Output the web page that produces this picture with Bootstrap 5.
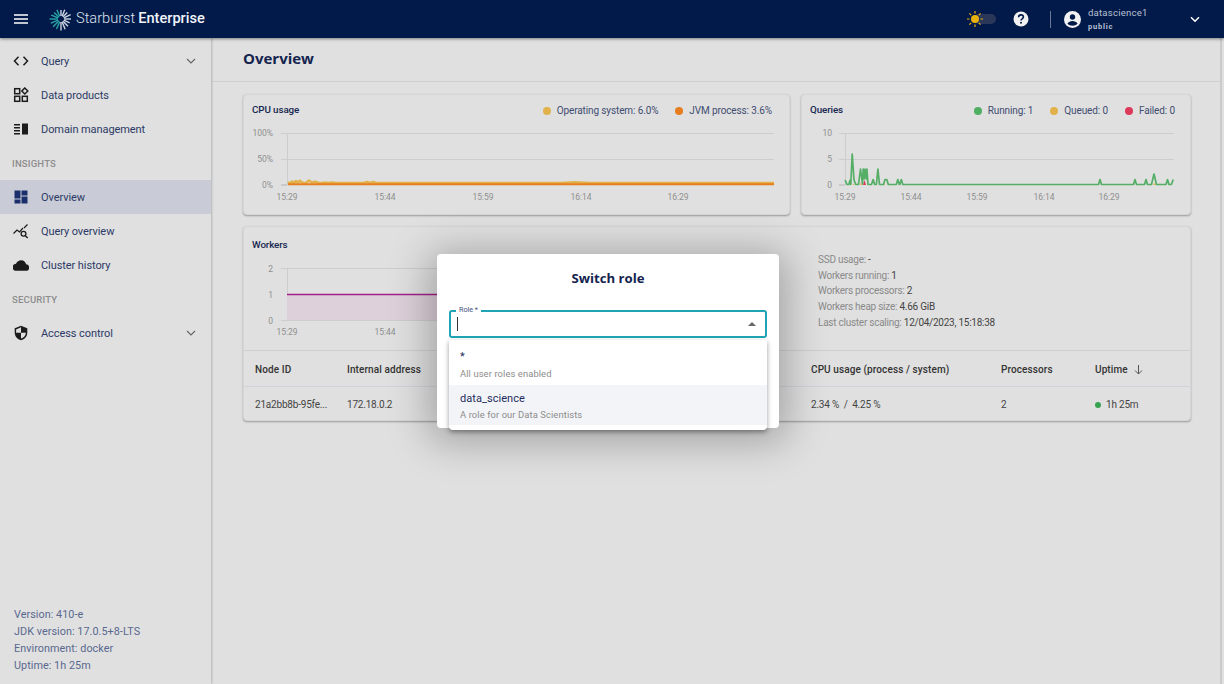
<!DOCTYPE html>
<html lang="en"><head><meta charset="utf-8"><title>Overview</title>
<link href="https://cdn.jsdelivr.net/npm/bootstrap@5.3.0/dist/css/bootstrap.min.css" rel="stylesheet">
<style>
html,body{height:100%;}
body{margin:0;overflow:hidden;background:#e0e0e0;font-family:Roboto,"Liberation Sans",sans-serif;color:#3b3b3b;width:1224px;height:684px;position:relative;}
.top-bar{height:38px;background:#021a4a;color:#fff;padding:0;flex-wrap:nowrap;box-shadow:0 1px 3px rgba(0,0,0,.45);position:relative;z-index:3;}
.burger{margin-left:14px;width:14px;height:12px;}
.brand{margin-left:21px;display:flex;align-items:center;}
.brand-word{font-size:14.6px;color:#dfe3ee;margin-left:3px;font-weight:300;}
.brand-word b{font-weight:500;color:#f1f3f8;margin-left:3px;}
.tools{margin-left:auto;display:flex;align-items:center;height:38px;}
.theme-toggle{margin-top:-1px;}
.help{margin-left:17px;}
.divider{width:1px;height:17px;background:#6c7896;margin:0 13px 0 21px;}
.user-box{width:102px;margin-left:7px;}
.u-name{font-size:9.6px;line-height:12px;color:#b9c0d2;letter-spacing:.2px;margin-top:-1px;}
.u-role{font-size:7.5px;line-height:9px;font-weight:700;color:#b9c0d2;letter-spacing:.8px;margin-top:3px;}
.user-chev{margin-right:24px;}
.shell{height:646px;}
.side{width:211px;flex:none;height:646px;background:#e0e0e0;box-shadow:1px 0 2px rgba(0,0,0,.2);padding-top:6px;position:relative;z-index:2;}
.nav-row{height:34px;display:flex;align-items:center;padding:2px 14px 0;font-size:11px;color:#2c3a66;letter-spacing:-.08px;}
.nav-row.on{background:#c9ccd6;}
.nav-row svg.ico{width:16px;height:16px;margin-left:-1px;margin-right:12px;flex:none;margin-top:-2px;}
.nav-row svg.chev{margin-left:auto;margin-right:1px;margin-top:-2px;}
.nav-head{height:34px;display:flex;align-items:center;padding:2px 12px 0;font-size:9.5px;color:#8d8d8d;letter-spacing:.2px;font-weight:500;}
.side-foot{position:absolute;left:14px;bottom:10px;font-size:10.8px;line-height:17px;color:#59688f;letter-spacing:.05px;}
.main{flex:none;width:1010px;margin-left:1px;border-right:2px solid #cbcbcb;}
.page-head{height:44px;border-bottom:1px solid #cfcfcf;padding:0 31px 3px;display:flex;align-items:center;margin-bottom:12px;}
.page-title{font-family:"Open Sans",sans-serif;font-weight:700;font-size:15px;color:#14244f;margin:0;}
.panes{padding:0 0 0 31px;width:1008px;}
.pane{background:#e0e0e0;border:1px solid #d6d6d6;border-radius:4px;box-shadow:0 1px 2px rgba(0,0,0,.32);color:inherit;}
.pane-cpu{width:547px;height:121px;}
.pane-q{width:390px;height:121px;margin-left:11px;}
.pane-work{width:948px;height:195px;margin-top:11px;}
.pane-top{height:31px;padding:0 15px 0 8px;display:flex;align-items:center;justify-content:space-between;}
.pane-cpu .pane-top{padding-right:17px;}
.pane-work .pane-top{height:37px;}
.pane-name{font-size:9.8px;font-weight:500;color:#15264f;letter-spacing:-.1px;}
.legend{display:flex;align-items:center;font-size:10px;color:#414d70;letter-spacing:-.12px;}
.dot{width:8px;height:8px;border-radius:50%;display:inline-block;margin-right:6px;margin-left:17px;}
.chart{display:block;}
.chart text{font-family:Roboto,sans-serif;font-size:8.5px;fill:#8f8f8f;}
.work-top{height:124px;position:relative;}
.stats{position:absolute;left:574px;top:25px;font-size:10px;line-height:15.7px;color:#8a8a8a;letter-spacing:-.25px;}
.stats span{color:#444;}
.work-table{width:100%;table-layout:fixed;margin:0;--bs-table-bg:transparent;font-size:10px;letter-spacing:-.2px;color:#444;}
.work-table th,.work-table td{padding:2px 0 0 11px;border-bottom:0;white-space:nowrap;vertical-align:middle;box-shadow:none;color:#444;}
.work-table th{height:36px;font-weight:500;color:#333;border-top:1px solid #cfcfcf;border-bottom:1px solid #d2d2dc;letter-spacing:.1px;}
.work-table td{height:34px;}
.live{width:6px;height:6px;border-radius:50%;background:#37a24f;display:inline-block;margin-right:5px;}
.dialog{position:absolute;left:437px;top:254px;width:342px;height:174px;background:#fff;border-radius:4px;box-shadow:0 6px 40px 8px rgba(0,0,0,.28);z-index:5;padding:0 12px;}
.dialog-title{font-family:"Open Sans",sans-serif;font-weight:700;font-size:13.2px;color:#14244f;text-align:center;margin:0;height:56px;line-height:48px;}
.role-field{height:28px;border:2px solid #1ea4b4;border-radius:3px;position:relative;display:flex;align-items:center;}
.role-tag{position:absolute;left:5px;top:-7px;background:#fff;padding:0 3px;font-size:7.2px;line-height:9px;color:#45527a;}
.cursor{width:1px;height:14px;background:#333;margin-left:6px;}
.arrow{margin-left:auto;margin-right:9px;width:0;height:0;border-left:4px solid transparent;border-right:4px solid transparent;border-bottom:4px solid #666;}
.role-menu{position:absolute;left:12px;top:86px;width:318px;height:90px;background:#fff;border:0;border-radius:0 0 4px 4px;box-shadow:0 2px 5px rgba(0,0,0,.4);}
.role-opt{border:0;padding:0 11px;border-radius:0!important;background:transparent;}
.opt-a{height:45px;}
.opt-b{height:40px;background:#f3f4f8;}
.opt-main{font-size:11px;color:#1e2d5e;letter-spacing:.05px;line-height:14px;}
.opt-sub{font-size:9.4px;color:#8c8c8c;letter-spacing:.1px;line-height:12px;}
.opt-a .opt-main{padding-top:10px;height:28px;}
.opt-b .opt-main{padding-top:7px;height:24px;}
</style></head><body>

<nav class="navbar top-bar d-flex align-items-center">
  <svg class="burger" viewBox="0 0 14 12"><path d="M0 2h14M0 6h14M0 10h14" stroke="#fff" stroke-width="1.5"/></svg>
  <span class="brand">
    <svg width="24" height="24" viewBox="-12 -12 24 24">
      <g stroke-width="1.4">
        <g stroke="#2aa6a8">
          <line x1="-3" y1="0" x2="-11.5" y2="0"/>
          <line x1="-3" y1="0" x2="-10.5" y2="0" transform="rotate(22)"/>
          <line x1="-3" y1="0" x2="-11" y2="0" transform="rotate(-22)"/>
          <line x1="-3" y1="0" x2="-9.5" y2="0" transform="rotate(44)"/>
          <line x1="-3" y1="0" x2="-11" y2="0" transform="rotate(-44)"/>
          <line x1="-3" y1="0" x2="-10" y2="0" transform="rotate(66)"/>
          <line x1="-3" y1="0" x2="-11" y2="0" transform="rotate(-66)"/>
        </g>
        <g stroke="#cfd6e4">
          <line x1="-3" y1="0" x2="-9" y2="0" transform="rotate(90)"/>
          <line x1="-3" y1="0" x2="-11.5" y2="0" transform="rotate(-90)"/>
          <line x1="-3" y1="0" x2="-10" y2="0" transform="rotate(112)"/>
          <line x1="-3" y1="0" x2="-11" y2="0" transform="rotate(-112)"/>
          <line x1="-3" y1="0" x2="-9" y2="0" transform="rotate(134)"/>
          <line x1="-3" y1="0" x2="-10" y2="0" transform="rotate(-134)"/>
          <line x1="-3" y1="0" x2="-10.5" y2="0" transform="rotate(156)"/>
          <line x1="-3" y1="0" x2="-9.5" y2="0" transform="rotate(-156)"/>
          <line x1="-3" y1="0" x2="-10" y2="0" transform="rotate(180)"/>
        </g>
      </g>
    </svg>
    <span class="brand-word">Starburst<b>Enterprise</b></span>
  </span>
  <div class="tools">
    <svg class="theme-toggle" width="30" height="18" viewBox="0 0 30 18">
      <rect x="8" y="4" width="22" height="10" rx="5" fill="#2b3759"/>
      <circle cx="9" cy="9" r="4" fill="#e9b10e"/>
      <path d="M9 1v2.500M9 14.500V17M1 9h2.500M14.500 9H17M3.400 3.400l1.800 1.800M12.800 12.800l1.800 1.800M3.400 14.600l1.800-1.800M12.800 5.200l1.800-1.800" stroke="#e9b10e" stroke-width="1.200"/>
    </svg>
    <svg class="help" width="16" height="16" viewBox="0 0 16 16">
      <circle cx="8" cy="8" r="7.500" fill="#f2f2f2"/>
      <path d="M5.600 6.200c0-1.500 1.100-2.300 2.400-2.300s2.400.8 2.400 2.100c0 1.900-2.400 1.900-2.400 3.600" fill="none" stroke="#021a4a" stroke-width="1.600"/>
      <circle cx="8" cy="11.800" r="1" fill="#021a4a"/>
    </svg>
    <span class="divider"></span>
    <svg width="17" height="17" viewBox="0 0 17 17">
      <circle cx="8.500" cy="8.500" r="8.500" fill="#f2f2f2"/>
      <circle cx="8.500" cy="6" r="2.700" fill="#021a4a"/>
      <path d="M3.400 12.800c1-2 3-2.800 5.100-2.800s4.100.8 5.100 2.800c-1.300 1.300-3.100 2-5.100 2s-3.800-.7-5.100-2z" fill="#021a4a"/>
    </svg>
    <div class="user-box">
      <div class="u-name">datascience1</div>
      <div class="u-role">public</div>
    </div>
    <svg class="user-chev" width="10" height="7" viewBox="0 0 10 7"><path d="M1 1.200l4 4 4-4" fill="none" stroke="#fff" stroke-width="1.500"/></svg>
  </div>
</nav>

<div class="shell d-flex">
  <aside class="side">
    <div class="nav-row"><svg class="ico" viewBox="0 0 16 16"><path d="M5.500 3.800L1.500 8l4 4.200M10.500 3.800l4 4.200-4 4.200" fill="none" stroke="#1c1c1c" stroke-width="1.500"/></svg>Query<svg class="chev" width="10" height="6" viewBox="0 0 10 6"><path d="M1 1l4 4 4-4" fill="none" stroke="#666" stroke-width="1.200"/></svg></div>
    <div class="nav-row"><svg class="ico" viewBox="0 0 16 16"><g fill="none" stroke="#1c1c1c" stroke-width="1.500"><rect x="1.700" y="1.700" width="5" height="5"/><rect x="1.700" y="9.300" width="5" height="5"/><rect x="9.300" y="9.300" width="5" height="5"/><path d="M11.800 1l3 3-3 3-3-3z"/></g></svg>Data products</div>
    <div class="nav-row"><svg class="ico" viewBox="0 0 16 16"><path d="M1 3h6v1.500H1zM1 6h6v1.500H1zM1 9h6v1.500H1zM1 12h6v1.500H1z" fill="#1c1c1c"/><rect x="9" y="2.500" width="6" height="11" fill="#1c1c1c"/></svg>Domain management</div>
    <div class="nav-head">INSIGHTS</div>
    <div class="nav-row on"><svg class="ico" viewBox="0 0 16 16"><path d="M1.500 1.500h6v8h-6zM8.500 1.500h6v5h-6zM1.500 10.500h6v4h-6zM8.500 7.500h6v7h-6z" fill="#1a2f6b"/></svg>Overview</div>
    <div class="nav-row"><svg class="ico" viewBox="0 0 16 16"><path d="M.5 10.500l3.500-3.500 2.500 2 3.500-4M11 5l3.500-3.500" fill="none" stroke="#1c1c1c" stroke-width="1.200"/><circle cx="10.500" cy="10.800" r="2.400" fill="none" stroke="#1c1c1c" stroke-width="1.300"/><path d="M12.300 12.700l2.400 2.300" stroke="#1c1c1c" stroke-width="1.400"/></svg>Query overview</div>
    <div class="nav-row"><svg class="ico" viewBox="0 0 16 16"><path d="M-.5 10.500c0-2.200 1.600-3.600 3.500-3.700C3.900 4.700 6 3.300 8.200 3.300c2.600 0 4.500 1.700 4.900 4 1.800.2 3.200 1.500 3.200 3.200 0 1.900-1.500 3.300-3.400 3.300H2.700c-1.800 0-3.200-1.400-3.200-3.300z" fill="#1c1c1c"/></svg>Cluster history</div>
    <div class="nav-head">SECURITY</div>
    <div class="nav-row"><svg class="ico" viewBox="0 0 16 16"><path d="M8 .8L1.700 3.300v4.400c0 3.700 2.700 6.700 6.300 7.500 3.600-.8 6.300-3.800 6.300-7.500V3.300z" fill="#1c1c1c"/><path d="M8 2.300v5.500H3.100v-3.400zM8 7.800h4.900c-.2 2.800-2.200 5-4.900 5.800z" fill="#e0e0e0"/></svg>Access control<svg class="chev" width="10" height="6" viewBox="0 0 10 6"><path d="M1 1l4 4 4-4" fill="none" stroke="#666" stroke-width="1.200"/></svg></div>
    <div class="side-foot">Version: 410-e<br>JDK version: 17.0.5+8-LTS<br>Environment: docker<br>Uptime: 1h 25m</div>
  </aside>

  <main class="main">
    <div class="page-head"><h1 class="page-title">Overview</h1></div>
    <div class="panes">
      <div class="d-flex">
        <section class="card pane pane-cpu">
          <div class="pane-top"><span class="pane-name">CPU usage</span>
            <span class="legend"><i class="dot" style="background:#e2b24a"></i>Operating system: 6.0%<i class="dot" style="background:#e67d1e"></i>JVM process: 3.6%</span></div>
          <svg class="chart" width="545" height="88" viewBox="244 126 545 88">
            <path d="M281 133.500H774M281 159.500H774" stroke="#cdcdcd"/>
            <path d="M287.500 133V185" stroke="#cdcdcd"/><path d="M281 185H287" stroke="#b5b5b5"/>
            <path d="M288 182.500L290 183.500 292 181.500 294 183 296 181 298 182.500 300 180.800 302 182.500 304 182.800 306 183 309 180.500 312 182.500 315 181.700 318 182.700 322 183 325 182.600 328 183 332 182.600 336 183H364L367 182 370 183 373 182 376 183H560L575 182.300 590 183H774" fill="none" stroke="#e2b24a" stroke-width="2.600" stroke-linejoin="round"/>
            <path d="M288 184.300H774" fill="none" stroke="#e67d1e" stroke-width="2"/>
            <text x="273" y="136" text-anchor="end">100%</text><text x="273" y="162" text-anchor="end">50%</text><text x="273" y="188" text-anchor="end">0%</text>
            <text x="287" y="200" text-anchor="middle">15:29</text><text x="385" y="200" text-anchor="middle">15:44</text><text x="483" y="200" text-anchor="middle">15:59</text><text x="581" y="200" text-anchor="middle">16:14</text><text x="678" y="200" text-anchor="middle">16:29</text>
          </svg>
        </section>
        <section class="card pane pane-q">
          <div class="pane-top"><span class="pane-name">Queries</span>
            <span class="legend"><i class="dot" style="background:#4fae62"></i>Running: 1<i class="dot" style="background:#e2b24a"></i>Queued: 0<i class="dot" style="background:#dc3a5a"></i>Failed: 0</span></div>
          <svg class="chart" width="388" height="88" viewBox="802 126 388 88">
            <path d="M839 133.500H1174M839 159.500H1174" stroke="#cdcdcd"/>
            <path d="M845.500 133V185" stroke="#cdcdcd"/><path d="M839 185H845" stroke="#b5b5b5"/>
            <path d="M860 185l1-3 1 3zM863 185l1.500-3 1.500 3zM852.500 185l1-1.500 1 1.500zM883 185l1-2 1 2zM1153 185l1.500-2 1.500 2z" fill="#e2b24a"/>
            <path d="M863 185l1.500-5 1.500 5z" fill="#dc3a5a"/>
            <path d="M845 180L847 184.500 849 184.300 850 180.300 850.800 184.300 852.200 154 854 180 855.800 184.500H858.500L860.500 169 862.500 184 863.200 169 864.200 179 865 169 866.200 179 866.900 169 868 184.500H871.500L873.100 179.500 874.700 184.500H876.400L877.900 169 879.500 184.500H883.500L885 179.500 886.800 179.500 888.300 184.500H896.300L897.800 179.500 899.300 184.500 899.800 184.500 901.300 179.500 902.800 184.500H1098.500L1100 179.500 1101.500 184.500H1133.500L1135 179.500 1136.500 184.500H1144.500L1146 179.500 1147.500 184.500H1151.500L1154 174 1156.500 184.500H1166L1167.500 179.500 1169 184.500H1171.300L1173.300 179.500" fill="none" stroke="#55ae66" stroke-width="1.700" stroke-linejoin="round"/>
            <text x="832" y="136" text-anchor="end">10</text><text x="832" y="162" text-anchor="end">5</text><text x="832" y="188" text-anchor="end">0</text>
            <text x="845" y="200" text-anchor="middle">15:29</text><text x="911" y="200" text-anchor="middle">15:44</text><text x="977" y="200" text-anchor="middle">15:59</text><text x="1044" y="200" text-anchor="middle">16:14</text><text x="1109" y="200" text-anchor="middle">16:29</text>
          </svg>
        </section>
      </div>
      <section class="card pane pane-work">
        <div class="work-top">
          <div class="pane-top"><span class="pane-name">Workers</span></div>
          <svg class="chart position-absolute top-0 start-0" width="540" height="123" viewBox="244 227 540 123">
            <path d="M281 268.500H775M281 320.500H775" stroke="#cdcdcd"/>
            <path d="M287.500 268V320" stroke="#cdcdcd"/>
            <rect x="287" y="295" width="488" height="25" fill="#ddd0da"/>
            <path d="M287 294.500H775" stroke="#a3228a" stroke-width="1.700"/>
            <text x="273" y="272" text-anchor="end">2</text><text x="273" y="298" text-anchor="end">1</text><text x="273" y="324" text-anchor="end">0</text>
            <text x="287" y="335" text-anchor="middle">15:29</text><text x="385" y="335" text-anchor="middle">15:44</text>
          </svg>
          <div class="stats">SSD usage: <span>-</span><br>Workers running: <span>1</span><br>Workers processors: <span>2</span><br>Workers heap size: <span>4.66 GiB</span><br>Last cluster scaling: <span>12/04/2023, 15:18:38</span></div>
        </div>
        <table class="table work-table">
          <colgroup><col style="width:92px"><col style="width:464px"><col style="width:190px"><col style="width:94px"><col></colgroup>
          <thead><tr><th>Node ID</th><th>Internal address</th><th>CPU usage (process / system)</th><th>Processors</th><th>Uptime <svg class="ms-1" width="9" height="10" viewBox="0 0 9 10"><path d="M4.500 0v9M1 5.500l3.500 3.500L8 5.500" fill="none" stroke="#555" stroke-width="1"/></svg></th></tr></thead>
          <tbody><tr><td>21a2bb8b-95fe...</td><td>172.18.0.2</td><td>2.34 %&nbsp; /&nbsp; 4.25 %</td><td>2</td><td><i class="live"></i>1h 25m</td></tr></tbody>
        </table>
      </section>
    </div>
  </main>
</div>

<div class="dialog" role="dialog">
  <h2 class="dialog-title">Switch role</h2>
  <div class="role-field"><span class="role-tag">Role *</span><span class="cursor"></span><span class="arrow"></span></div>
  <div class="list-group role-menu">
    <div class="list-group-item role-opt opt-a"><div class="opt-main">*</div><div class="opt-sub">All user roles enabled</div></div>
    <div class="list-group-item role-opt opt-b"><div class="opt-main">data_science</div><div class="opt-sub">A role for our Data Scientists</div></div>
  </div>
</div>
</body></html>
